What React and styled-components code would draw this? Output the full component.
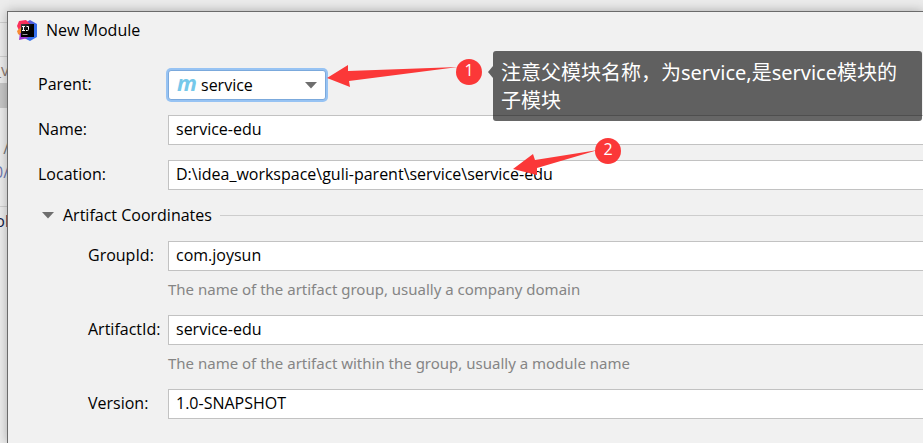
import React from "react";
import styled, { createGlobalStyle } from "styled-components";

const GlobalStyle = createGlobalStyle`
  *, *::before, *::after { box-sizing: border-box; }
  html, body { margin: 0; overflow: hidden; }
  body {
    background: #ebebeb;
    color: #000;
    font: 16px/20px "Open Sans", "Noto Sans CJK SC", sans-serif;
  }
`;

const Page = styled.div`
  position: relative;
  min-height: 100vh;
  padding: 11px 0 0 7px;
  overflow: hidden;
`;

const Editor = styled.div`
  position: absolute;
  inset: 0 auto 0 0;
  width: 9px;
  overflow: hidden;
  padding-top: 22px;
  background: #ececec;
`;

const EditorLine = styled.div`
  display: flex;
  justify-content: flex-end;
  align-items: center;
  height: ${(p) => p.$height}px;
  color: ${(p) => p.$color || "#000"};
  background: ${(p) => p.$fill || "transparent"};
  border-top: ${(p) => (p.$rule ? "1px solid #cfcfcf" : "0")};
  white-space: nowrap;
`;

const Dialog = styled.main`
  position: relative;
  display: flex;
  flex-direction: column;
  min-height: calc(100vh - 11px);
  background: #f1f1f1;
  border: solid #6b6b6b;
  border-width: 1px 0 0 1px;
  box-shadow: 0 0 10px rgba(0, 0, 0, 0.28);
`;

const TitleBar = styled.header`
  display: flex;
  align-items: center;
  gap: 8px;
  height: 36px;
  padding-left: 9px;
`;

const Title = styled.h1`
  margin: 0;
  font: inherit;
`;

const Form = styled.form`
  display: flex;
  flex-direction: column;
  gap: 15px;
  padding: 22px 0 0 30px;
`;

const Row = styled.div`
  display: grid;
  grid-template-columns: ${(p) => (p.$nested ? 80 : 130)}px 1fr;
  align-items: center;
`;

const Label = styled.label`
  padding-bottom: 2px;
  white-space: nowrap;
`;

const TextInput = styled.input`
  width: 100%;
  min-width: 0;
  height: 30px;
  padding: 0 7px 2px;
  border: 1px solid #c2c2c2;
  border-right: 0;
  border-radius: 0;
  outline: 0;
  background: #fff;
  color: inherit;
  font: inherit;
`;

const Combo = styled.div`
  display: grid;
  grid-template-columns: 24px 1fr 20px;
  align-items: center;
  width: 158px;
  height: 30px;
  padding-left: 8px;
  border: 1px solid #7ba9dc;
  border-radius: 3px;
  background: #fff;
  box-shadow: 0 0 0 2px #97c3f3;
`;

const ModuleMark = styled.span`
  grid-area: 1 / 1;
  padding-bottom: 6px;
  color: #75c8ea;
  font: italic bold 22px/22px "Noto Sans", sans-serif;
`;

const Select = styled.select`
  grid-area: 1 / 1 / 2 / 4;
  appearance: none;
  height: 28px;
  padding: 0 0 0 24px;
  border: 0;
  outline: 0;
  background: transparent;
  color: inherit;
  font: inherit;
`;

const ComboArrow = styled.svg`
  grid-area: 1 / 3;
  width: 12px;
  height: 8px;
  pointer-events: none;
`;

const SectionToggle = styled.button`
  display: grid;
  grid-template-columns: 21px auto 1fr;
  align-items: center;
  height: 22px;
  margin-bottom: -1px;
  padding: 0 0 2px 4px;
  border: 0;
  background: transparent;
  color: inherit;
  font: inherit;

  &::after {
    content: "";
    height: 1px;
    margin-left: 8px;
    background: #cdcdcd;
  }
`;

const Coordinates = styled.div`
  display: flex;
  flex-direction: column;
  padding-left: 50px;
`;

const Hint = styled.p`
  grid-column: 2;
  height: 44px;
  margin: 0;
  padding-top: 8px;
  color: #858585;
  font: 15px/20px "Noto Sans", sans-serif;
  white-space: nowrap;
`;

const Annotations = styled.svg`
  position: absolute;
  top: 0;
  left: 0;
  width: 660px;
  height: 200px;
  pointer-events: none;
`;

const Badge = styled.span`
  position: absolute;
  left: ${(p) => p.$x}px;
  top: ${(p) => p.$y}px;
  width: 26px;
  height: 26px;
  border-radius: 50%;
  background: #fb3838;
  color: #fff;
  font-size: 16px;
  line-height: 22px;
  text-align: center;
`;

const Note = styled.aside`
  position: absolute;
  left: 493px;
  right: 1px;
  top: 51px;
  padding: 8px 20px 6px 8px;
  border-radius: 3px;
  background: rgba(0, 0, 0, 0.6);
  color: #fff;
  font: 20px/28px "Noto Sans", "Noto Sans CJK SC", sans-serif;

  &::before {
    content: "";
    position: absolute;
    left: -5px;
    top: 15px;
    border: solid transparent;
    border-width: 6px 5px 6px 0;
    border-right-color: rgba(0, 0, 0, 0.6);
  }
`;

const LogoSvg = styled.svg`
  width: 21px;
  height: 21px;
`;

function Logo() {
  return (
    <LogoSvg viewBox="0 0 21 21" aria-hidden="true">
      <defs>
        <linearGradient id="blue" x1="0" y1="0" x2="1" y2="1">
          <stop offset="0" stopColor="#7c50ca" />
          <stop offset="0.6" stopColor="#356bea" />
          <stop offset="1" stopColor="#3977ee" />
        </linearGradient>
        <linearGradient id="dark" x1="0" y1="0" x2="1" y2="1">
          <stop offset="0" stopColor="#444" />
          <stop offset="0.5" stopColor="#000" />
        </linearGradient>
      </defs>
      <path d="M13 0 20 4v13l-7 4-6-3L8 3z" fill="url(#blue)" />
      <path d="M2 1 9 0l4 4-2 8-8 1-3-7z" fill="#fb305b" />
      <path d="M0 11 4 7v9l-3-2z" fill="#f98b32" />
      <path d="M3 13h10l-2 5-9 2z" fill="#9d38d1" />
      <rect x="4" y="4" width="13" height="13" fill="url(#dark)" />
      <path
        d="M5 6.5h3M6.5 6.5v4M5 10.5h3M9.5 6.5h2v3q0 1-1 1H9"
        fill="none"
        stroke="#fff"
        strokeWidth="1"
      />
      <path d="M5.5 14.5h5" stroke="#999" strokeWidth="1" />
    </LogoSvg>
  );
}

function Triangle(props) {
  return (
    <svg width="12" height="8" viewBox="0 0 12 8" aria-hidden="true" {...props}>
      <path d="M0 1h12L6 7.5z" fill="#6e6e6e" />
    </svg>
  );
}

function Field({ id, label, value, hint, nested }) {
  return (
    <Row $nested={nested}>
      <Label htmlFor={id}>{label}</Label>
      <TextInput id={id} type="text" defaultValue={value} />
      {hint && <Hint>{hint}</Hint>}
    </Row>
  );
}

export default function App() {
  const [open, setOpen] = React.useState(true);
  return (
    <Page>
      <GlobalStyle />
      <Editor aria-hidden="true">
        <EditorLine $height={34} $rule />
        <EditorLine $height={27} $rule $color="#8c7b72">_v</EditorLine>
        <EditorLine $height={25} $fill="#c6c6c6" />
        <EditorLine $height={28} />
        <EditorLine $height={24} $color="#777">/</EditorLine>
        <EditorLine $height={24} $color="#6f78b0">0/</EditorLine>
        <EditorLine $height={22} />
        <EditorLine $height={28} $rule $color="#101a4a">ol</EditorLine>
      </Editor>
      <Dialog>
        <TitleBar>
          <Logo />
          <Title>New Module</Title>
        </TitleBar>
        <Form onSubmit={(e) => e.preventDefault()}>
          <Row>
            <Label htmlFor="parent">Parent:</Label>
            <Combo>
              <ModuleMark aria-hidden="true">m</ModuleMark>
              <Select id="parent" defaultValue="service">
                <option>service</option>
              </Select>
              <ComboArrow as={Triangle} />
            </Combo>
          </Row>
          <Field id="name" label="Name:" value="service-edu" />
          <Field
            id="location"
            label="Location:"
            value={"D:\\idea_workspace\\guli-parent\\service\\service-edu"}
          />
          <SectionToggle type="button" aria-expanded={open} onClick={() => setOpen(!open)}>
            <Triangle />
            <span>Artifact Coordinates</span>
          </SectionToggle>
          {open && (
            <Coordinates>
              <Field
                nested
                id="group"
                label="GroupId:"
                value="com.joysun"
                hint="The name of the artifact group, usually a company domain"
              />
              <Field
                nested
                id="artifact"
                label="ArtifactId:"
                value="service-edu"
                hint="The name of the artifact within the group, usually a module name"
              />
              <Field nested id="version" label="Version:" value="1.0-SNAPSHOT" />
            </Coordinates>
          )}
        </Form>
      </Dialog>
      <Annotations viewBox="0 0 660 200" aria-hidden="true">
        <path d="M327 78 348 65V71L458 67 349 81 350 87z" fill="#fb3838" />
        <path d="M513 169 533 154 535 160 598 150 537 168V175z" fill="#fb3838" />
      </Annotations>
      <Badge $x={456} $y={59}>1</Badge>
      <Badge $x={595} $y={138}>2</Badge>
      <Note>注意父模块名称，为service,是service模块的子模块</Note>
    </Page>
  );
}
